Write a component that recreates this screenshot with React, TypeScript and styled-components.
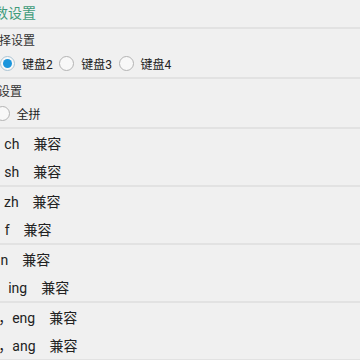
import React from 'react'
import styled, { createGlobalStyle } from 'styled-components'

const GlobalStyle = createGlobalStyle`
  html, body {
    margin: 0;
    padding: 0;
    background: #f0f0f0;
    overflow: hidden;
  }
  body {
    font-family: Roboto, "Noto Sans CJK SC", sans-serif;
  }
`

type Opt = { label: string; checked?: boolean }

const keyboards: Opt[] = [
  { label: '键盘2', checked: true },
  { label: '键盘3' },
  { label: '键盘4' },
]

const fuzzyGroups: string[][] = [
  ['c，ch', 's，sh'],
  ['z，zh', 'h，f'],
  ['l，n', 'in，ing'],
  ['en，eng', 'an，ang'],
]

const App = () => {
  return (
    <>
      <GlobalStyle />
      <Page>
        <Title>参数设置</Title>
        <Divider />
        <Section $top={5} $gap={7}>
          <SectionLabel $indent={7}>选择设置</SectionLabel>
          <RadioRow $indent={20}>
            {keyboards.map((k) => (
              <Option key={k.label}>
                <Radio $checked={!!k.checked} />
                {k.label}
              </Option>
            ))}
          </RadioRow>
        </Section>
        <Divider />
        <Section $top={6} $gap={6}>
          <SectionLabel $indent={-6}>拼音设置</SectionLabel>
          <RadioRow $indent={14.5}>
            <Option>
              <Radio $checked={false} />
              全拼
            </Option>
          </RadioRow>
        </Section>
        {fuzzyGroups.map((g, i) => (
          <React.Fragment key={i}>
            <Divider />
            <FuzzyGroup>
              {g.map((r) => (
                <FuzzyRow key={r}>
                  {r}
                  <Compat>兼容</Compat>
                </FuzzyRow>
              ))}
            </FuzzyGroup>
          </React.Fragment>
        ))}
        <Divider />
      </Page>
    </>
  )
}

export default App

const Page = styled.div`
  margin-left: -20px;
  width: 380px;
`
const Title = styled.div`
  height: 27px;
  line-height: 27px;
  font-size: 14px;
  color: #3f9b7b;
`
const Divider = styled.div`
  height: 2px;
  background: #e2e2e2;
`
const Section = styled.div<{ $top: number; $gap: number }>`
  display: flex;
  flex-direction: column;
  gap: ${(p) => p.$gap}px;
  padding: ${(p) => p.$top}px 0 6px;
`
const SectionLabel = styled.div<{ $indent: number }>`
  font-size: 12px;
  line-height: 14px;
  color: #333;
  margin-left: ${(p) => p.$indent}px;
`
const RadioRow = styled.div<{ $indent: number }>`
  display: flex;
  align-items: center;
  height: 16px;
  padding-left: ${(p) => p.$indent}px;
`
const Option = styled.label`
  display: flex;
  align-items: center;
  gap: 7px;
  margin-right: 6.5px;
  font-size: 12px;
  color: #222;
`
const Radio = styled.span<{ $checked: boolean }>`
  width: 15px;
  height: 15px;
  box-sizing: border-box;
  border-radius: 50%;
  border: 1.5px solid ${(p) => (p.$checked ? '#a9c3d3' : '#b3b3b3')};
  background: #f8f8f8;
  display: flex;
  align-items: center;
  justify-content: center;
  &::after {
    content: '';
    display: ${(p) => (p.$checked ? 'block' : 'none')};
    width: 9px;
    height: 9px;
    border-radius: 50%;
    background: #1b95dc;
  }
`
const FuzzyGroup = styled.div``
const FuzzyRow = styled.div`
  height: 28px;
  display: flex;
  align-items: center;
  padding-left: 3px;
  font-size: 14px;
  color: #222;
`
const Compat = styled.span`
  margin-left: 14px;
`
